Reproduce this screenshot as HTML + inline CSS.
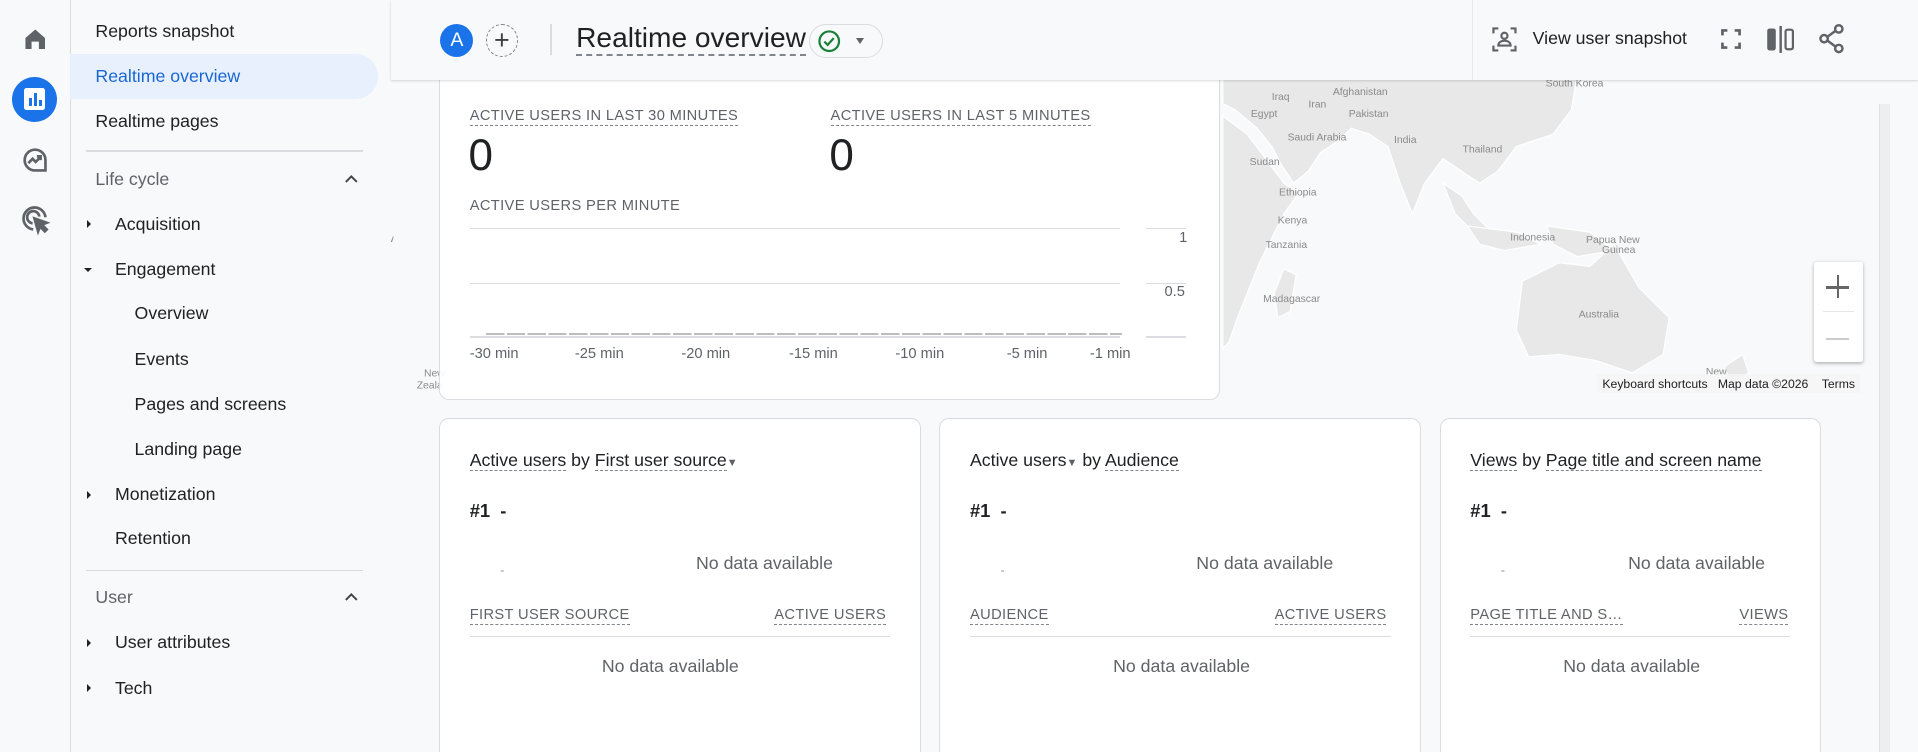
<!DOCTYPE html>
<html><head><meta charset="utf-8"><style>
html,body{margin:0;padding:0;width:1918px;height:752px;overflow:hidden;background:#f8f9fa;font-family:"Liberation Sans",Arial,sans-serif;}
#w{zoom:1.2232;position:relative;width:1568px;height:615px;overflow:hidden;}
.a{position:absolute;white-space:nowrap;}
.nav{font-size:14.5px;color:#202124;}
.sec{font-size:14.5px;color:#5f6368;}
.tri{position:absolute;width:0;height:0;}
.lbl{font-size:12px;color:#5f6368;letter-spacing:.3px;border-bottom:1px dashed #80868b;padding-bottom:1px;}
.card{position:absolute;background:#fff;border:1px solid #dadce0;border-radius:8px;}
.ax{font-size:12px;color:#5f6368;}
.t{font-size:14.5px;color:#202124;}
.d{border-bottom:1px dashed #80868b;}
.nd{font-size:14.5px;color:#5f6368;}
</style></head><body><div id="w">
<!-- map -->
<svg class="a" style="left:320px;top:55px" width="1220" height="280" viewBox="320 55 1220 280">
<g fill="#e8e8e8" stroke="#fff" stroke-width="1">
<path d="M1000 60 L1290 60 L1285 90 L1270 110 L1240 120 L1225 140 L1210 150 L1195 140 L1180 130 L1165 150 L1155 175 L1145 150 L1135 120 L1120 110 L1105 105 L1095 115 L1080 125 L1070 140 L1058 150 L1048 135 L1040 120 L1028 105 L1010 90 L1000 85Z"/>
<path d="M1000 95 L1020 110 L1035 130 L1050 150 L1062 158 L1050 175 L1040 195 L1030 215 L1020 240 L1012 260 L1005 280 L1000 285Z"/>
<path d="M1180 150 L1195 160 L1205 175 L1220 190 L1215 200 L1200 185 L1190 175Z"/>
<path d="M1200 185 L1240 190 L1260 200 L1230 205 L1210 200Z"/>
<path d="M1265 185 L1300 190 L1320 205 L1290 210 L1270 200Z"/>
<path d="M1245 230 L1275 215 L1300 218 L1320 200 L1340 235 L1365 260 L1360 290 L1335 305 L1305 295 L1275 290 L1250 292 L1240 270Z"/>
<path d="M1050 220 L1060 225 L1055 255 L1045 260 L1042 240Z"/>
<path d="M1410 300 L1425 290 L1430 305 L1415 315Z"/>
</g>
<g font-size="8.5" fill="#8a8a8a" font-family="Liberation Sans">
<text x="1090" y="78">Afghanistan</text><text x="1040" y="82">Iraq</text><text x="1070" y="88">Iran</text><text x="1103" y="96">Pakistan</text>
<text x="1053" y="115">Saudi Arabia</text><text x="1140" y="117">India</text><text x="1196" y="125">Thailand</text><text x="1023" y="96">Egypt</text>
<text x="1022" y="135">Sudan</text><text x="1046" y="160">Ethiopia</text><text x="1045" y="183">Kenya</text><text x="1035" y="203">Tanzania</text>
<text x="1235" y="197">Indonesia</text><text x="1297" y="199">Papua New</text><text x="1310" y="207">Guinea</text>
<text x="1033" y="247">Madagascar</text><text x="1291" y="260">Australia</text><text x="1264" y="71">South Korea</text><text x="1395" y="307">New</text>
<text x="316" y="198">w</text><text x="347" y="308">New</text><text x="341" y="318">Zeala</text>
</g></svg>
<div class="a" style="left:1306px;top:306px;font-size:10px;color:#202124;background:rgba(245,245,245,.8);padding:2px 4px">Keyboard shortcuts &nbsp; Map data ©2026 &nbsp;&nbsp; Terms</div>
<div class="a" style="left:1483px;top:214px;width:40px;height:82px;background:#fff;box-shadow:0 1px 3px rgba(0,0,0,.3);border-radius:2px">
<div class="a" style="left:10px;top:20px;width:19px;height:2px;background:#666"></div><div class="a" style="left:18.5px;top:11px;width:2px;height:19px;background:#666"></div>
<div class="a" style="left:7px;top:40px;width:26px;height:1px;background:#e6e6e6"></div>
<div class="a" style="left:10px;top:62px;width:19px;height:2px;background:#ccc"></div></div>
<div class="a" style="left:1536px;top:85px;width:8px;height:530px;background:#eee;border-left:1px solid #e0e0e0"></div>
<!-- realtime card -->
<div class="card" style="left:359px;top:40px;width:637px;height:286px;border-top:none;border-radius:0 0 8px 8px;background:rgba(255,255,255,.93)"></div>
<div class="a lbl" style="left:384px;top:88px">ACTIVE USERS IN LAST 30 MINUTES</div>
<div class="a lbl" style="left:679px;top:88px">ACTIVE USERS IN LAST 5 MINUTES</div>
<div class="a" style="left:383px;top:107px;font-size:36px;color:#202124">0</div>
<div class="a" style="left:678px;top:107px;font-size:36px;color:#202124">0</div>
<div class="a" style="left:384px;top:162px;font-size:12px;color:#5f6368;letter-spacing:.3px">ACTIVE USERS PER MINUTE</div>
<div class="a" style="left:384px;top:186px;width:532px;height:1px;background:#dadce0"></div>
<div class="a" style="left:937px;top:186px;width:33px;height:1px;background:#dadce0"></div>
<div class="a" style="left:384px;top:231px;width:532px;height:1px;background:#dadce0"></div>
<div class="a" style="left:937px;top:231px;width:33px;height:1px;background:#dadce0"></div>
<div class="a" style="left:384px;top:275px;width:532px;height:1px;background:#dadce0"></div>
<div class="a" style="left:937px;top:275px;width:33px;height:1px;background:#dadce0"></div>
<div class="a" style="left:397px;top:272px;width:520px;height:2px;background:repeating-linear-gradient(90deg,#bdbdbd 0 15px,transparent 15px 17px)"></div>
<div class="a ax" style="left:964px;top:188px">1</div>
<div class="a ax" style="left:952px;top:232px">0.5</div>
<div class="a ax" style="left:384px;top:283px">-30 min</div><div class="a ax" style="left:470px;top:283px">-25 min</div><div class="a ax" style="left:557px;top:283px">-20 min</div><div class="a ax" style="left:645px;top:283px">-15 min</div><div class="a ax" style="left:732px;top:283px">-10 min</div><div class="a ax" style="left:823px;top:283px">-5 min</div><div class="a ax" style="left:891px;top:283px">-1 min</div>
<!-- header -->
<div class="a" style="left:320px;top:0;width:1248px;height:65px;background:#f8f9fa;box-shadow:0 1px 2px rgba(0,0,0,.18)"></div>
<div class="a" style="left:360px;top:20px;width:27px;height:27px;border-radius:50%;background:#1a73e8;color:#fff;font-size:16px;text-align:center;line-height:27px">A</div>
<div class="a" style="left:397px;top:20px;width:25px;height:25px;border-radius:50%;border:1px dashed #80868b;color:#3c4043;font-size:22px;text-align:center;line-height:25px">+</div>
<div class="a" style="left:450px;top:20px;width:1px;height:25px;background:#dadce0"></div>
<div class="a" style="left:471px;top:17px;font-size:23px;color:#202124;border-bottom:2px dashed #80868b;line-height:27px">Realtime overview</div>
<div class="a" style="left:661px;top:20px;width:59px;height:26px;border:1px solid #dadce0;border-radius:14px"></div>
<svg class="a" style="left:668px;top:24px" width="20" height="20" viewBox="0 0 20 20"><circle cx="10" cy="10" r="8" fill="none" stroke="#188038" stroke-width="1.8"/><path d="M6 10.3l2.7 2.7 5-5.5" fill="none" stroke="#188038" stroke-width="1.8"/></svg>
<div class="tri" style="left:700px;top:31px;border:4px solid transparent;border-top:5px solid #5f6368"></div>
<div class="a" style="left:1203px;top:0;width:1px;height:65px;background:#e8eaed"></div>
<svg class="a" style="left:1219px;top:21px" width="22" height="22" viewBox="0 0 22 22" fill="none" stroke="#5f6368" stroke-width="1.8"><path d="M2 6V2h4M16 2h4v4M2 16v4h4M20 16v4h-4"/><circle cx="11" cy="8" r="2.5"/><path d="M6 16c0-3 3-4 5-4s5 1 5 4z"/></svg>
<div class="a" style="left:1253px;top:23px;font-size:14.5px;color:#202124">View user snapshot</div>
<svg class="a" style="left:1406px;top:23px" width="18" height="18" viewBox="0 0 18 18" fill="none" stroke="#5f6368" stroke-width="2.2"><path d="M2 6V2h4M12 2h4v4M2 12v4h4M16 12v4h-4"/></svg>
<svg class="a" style="left:1444px;top:21px" width="24" height="22" viewBox="0 0 24 22"><rect x="1" y="2" width="7" height="18" rx="2" fill="#5f6368"/><rect x="11" y="0" width="2" height="22" fill="#5f6368"/><rect x="16" y="3" width="6" height="16" rx="1.5" fill="none" stroke="#5f6368" stroke-width="1.8"/></svg>
<svg class="a" style="left:1486px;top:20px" width="22" height="24" viewBox="0 0 22 24" fill="none" stroke="#5f6368" stroke-width="2"><circle cx="17" cy="4" r="3"/><circle cx="5" cy="12" r="3"/><circle cx="17" cy="20" r="3"/><path d="M7.6 10.5l6.8-5M7.6 13.5l6.8 5"/></svg>
<!-- rail & nav -->
<div class="a" style="left:0;top:0;width:57px;height:615px;background:#f8f9fa;border-right:1px solid #dadce0"></div>
<svg class="a" style="left:19px;top:22px" width="20" height="20" viewBox="0 0 20 20"><path d="M2 9L10 2l8 7v9h-5v-6H7v6H2z" fill="#5f6368"/></svg>
<div class="a" style="left:10px;top:63px;width:37px;height:37px;border-radius:50%;background:#1a73e8"></div>
<div class="a" style="left:20px;top:72px;width:17px;height:18px;background:#fff;border-radius:2px"></div>
<div class="a" style="left:24px;top:80px;width:2px;height:7px;background:#1a73e8"></div><div class="a" style="left:28px;top:76px;width:2px;height:11px;background:#1a73e8"></div><div class="a" style="left:32px;top:82px;width:2px;height:5px;background:#1a73e8"></div>
<svg class="a" style="left:17px;top:119px" width="23" height="23" viewBox="0 0 23 23" fill="none" stroke="#5f6368" stroke-width="2.2"><path d="M20 11.5A8.5 8.5 0 1 0 11.5 20H20z"/><path d="M6 14l3.5-3.5 2.5 2.5 4-4M13 8.5h3v3"/></svg>
<svg class="a" style="left:17px;top:168px" width="24" height="24" viewBox="0 0 24 24" fill="none" stroke="#5f6368" stroke-width="2.2"><path d="M20 10A9 9 0 1 0 10 20"/><path d="M15 9.5A5 5 0 1 0 9.5 15"/><path d="M11 11l10 3.5-4 1.5 4 4-1.5 1.5-4-4-1.5 4z" fill="#5f6368"/></svg>
<div class="a" style="left:57px;top:44px;width:252px;height:37px;background:#e8f0fe;border-radius:0 19px 19px 0"></div>
<div class="a nav" style="left:78px;top:17px">Reports snapshot</div>
<div class="a nav" style="left:78px;top:54px;color:#1967d2">Realtime overview</div>
<div class="a nav" style="left:78px;top:91px">Realtime pages</div>
<div class="a" style="left:70px;top:123px;width:227px;height:1px;background:#dadce0"></div>
<div class="a sec" style="left:78px;top:138px">Life cycle</div>
<svg class="a" style="left:281px;top:142px" width="12" height="8" viewBox="0 0 12 8" fill="none" stroke="#444" stroke-width="1.6"><path d="M1.5 6.5L6 2l4.5 4.5"/></svg>
<div class="tri" style="left:71px;top:180px;border:4px solid transparent;border-left:4px solid #202124;border-right:0"></div>
<div class="a nav" style="left:94px;top:175px">Acquisition</div>
<div class="tri" style="left:69px;top:219px;border:4px solid transparent;border-top:4px solid #202124;border-bottom:0"></div>
<div class="a nav" style="left:94px;top:212px">Engagement</div>
<div class="a nav" style="left:110px;top:248px">Overview</div>
<div class="a nav" style="left:110px;top:285px">Events</div>
<div class="a nav" style="left:110px;top:322px">Pages and screens</div>
<div class="a nav" style="left:110px;top:359px">Landing page</div>
<div class="tri" style="left:71px;top:401px;border:4px solid transparent;border-left:4px solid #202124;border-right:0"></div>
<div class="a nav" style="left:94px;top:396px">Monetization</div>
<div class="a nav" style="left:94px;top:432px">Retention</div>
<div class="a" style="left:70px;top:466px;width:227px;height:1px;background:#dadce0"></div>
<div class="a sec" style="left:78px;top:480px">User</div>
<svg class="a" style="left:281px;top:484px" width="12" height="8" viewBox="0 0 12 8" fill="none" stroke="#444" stroke-width="1.6"><path d="M1.5 6.5L6 2l4.5 4.5"/></svg>
<div class="tri" style="left:71px;top:522px;border:4px solid transparent;border-left:4px solid #202124;border-right:0"></div>
<div class="a nav" style="left:94px;top:517px">User attributes</div>
<div class="tri" style="left:71px;top:559px;border:4px solid transparent;border-left:4px solid #202124;border-right:0"></div>
<div class="a nav" style="left:94px;top:554px">Tech</div>
<!-- bottom cards -->
<div class="card" style="left:359px;top:342px;width:392px;height:290px"></div>
<div class="card" style="left:768px;top:342px;width:392px;height:290px"></div>
<div class="card" style="left:1177px;top:342px;width:310px;height:290px"></div>
<div class="a t" style="left:384px;top:368px"><span class="d">Active users</span> by <span class="d">First user source</span><span style="font-size:9px;color:#5f6368">▼</span></div>
<div class="a t" style="left:793px;top:368px">Active users<span style="font-size:9px;color:#5f6368">▼</span> by <span class="d">Audience</span></div>
<div class="a t" style="left:1202px;top:368px"><span class="d">Views</span> by <span class="d">Page title and screen name</span></div>
<div class="a" style="left:384px;top:409px;font-size:15px;font-weight:bold;color:#202124">#1 &nbsp;-</div>
<div class="a" style="left:793px;top:409px;font-size:15px;font-weight:bold;color:#202124">#1 &nbsp;-</div>
<div class="a" style="left:1202px;top:409px;font-size:15px;font-weight:bold;color:#202124">#1 &nbsp;-</div>
<div class="a nd" style="left:569px;top:452px">No data available</div>
<div class="a nd" style="left:978px;top:452px">No data available</div>
<div class="a nd" style="left:1331px;top:452px">No data available</div>
<div class="a" style="left:409px;top:460px;font-size:10px;color:#888">-</div><div class="a" style="left:818px;top:460px;font-size:10px;color:#888">-</div><div class="a" style="left:1227px;top:460px;font-size:10px;color:#888">-</div>
<div class="a lbl" style="left:384px;top:496px">FIRST USER SOURCE</div><div class="a lbl" style="left:633px;top:496px">ACTIVE USERS</div>
<div class="a lbl" style="left:793px;top:496px">AUDIENCE</div><div class="a lbl" style="left:1042px;top:496px">ACTIVE USERS</div>
<div class="a lbl" style="left:1202px;top:496px">PAGE TITLE AND S…</div><div class="a lbl" style="left:1422px;top:496px">VIEWS</div>
<div class="a" style="left:384px;top:520px;width:344px;height:1px;background:#dadce0"></div>
<div class="a" style="left:793px;top:520px;width:344px;height:1px;background:#dadce0"></div>
<div class="a" style="left:1202px;top:520px;width:261px;height:1px;background:#dadce0"></div>
<div class="a nd" style="left:492px;top:536px">No data available</div>
<div class="a nd" style="left:910px;top:536px">No data available</div>
<div class="a nd" style="left:1278px;top:536px">No data available</div>
</div></body></html>
